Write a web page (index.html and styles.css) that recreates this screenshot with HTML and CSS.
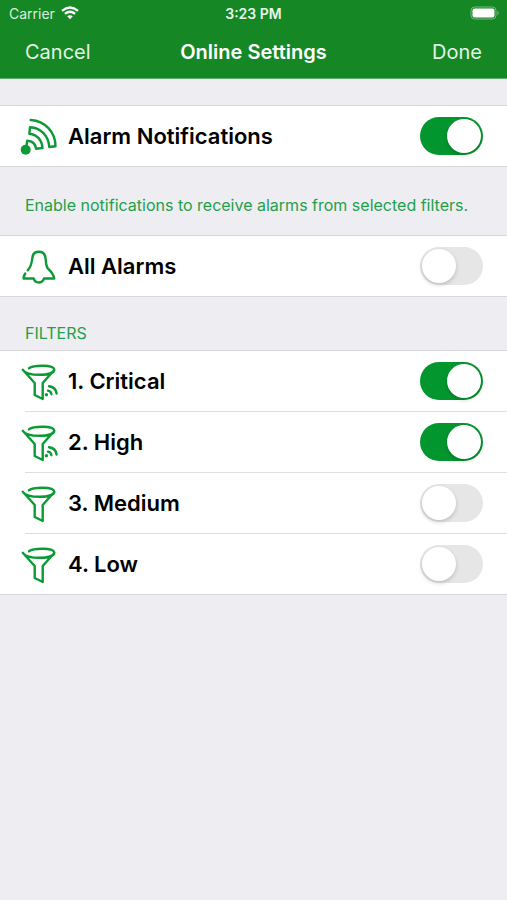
FILE: index.html
```html
<!DOCTYPE html>
<html lang="en">
<head>
<meta charset="utf-8">
<meta name="viewport" content="width=device-width, initial-scale=1">
<title>Online Settings</title>
<link rel="stylesheet" href="styles.css">
</head>
<body>
<svg class="defs" aria-hidden="true">
  <symbol id="funnel" viewBox="0 0 40 40">
    <path d="M9 7.2C13 4.3 33.5 3.2 34.3 8.6C34 15.5 7 15.5 2.8 8.8L14.7 22V34L22.7 38V22L34.3 9"/>
  </symbol>
  <symbol id="waves" viewBox="0 0 40 40">
    <circle class="dot" cx="26.4" cy="33.8" r="1.7"/>
    <path d="M28 29.6Q31 30 31.4 33.2M29 25.2Q35.8 26 36.6 32.5"/>
  </symbol>
</svg>
<header class="top">
  <div class="status">
    <span class="carrier">Carrier
      <svg class="wifi" viewBox="0 0 18 14" aria-hidden="true"><path d="M1 4.8Q9-2 17 4.8M3.9 7.9Q9 3.8 14.1 7.900"/><path class="tip" d="M6.200 10.300Q9 8 11.800 10.300L9 13.300Z"/></svg>
    </span>
    <span class="time">3:23 PM</span>
    <svg class="battery" viewBox="0 0 30 14" aria-hidden="true"><rect class="shell" x="1" y="1" width="25" height="12" rx="3.500"/><rect class="charge" x="2.500" y="2.500" width="22" height="9" rx="2"/><path class="cap" d="M27.500 4.500Q30 7 27.500 9.500Z"/></svg>
  </div>
  <nav class="bar">
    <button type="button">Cancel</button>
    <h1>Online Settings</h1>
    <button type="button" class="done">Done</button>
  </nav>
</header>
<main>
  <section class="group first">
    <label class="row">
      <svg class="icon" viewBox="0 0 40 40" aria-hidden="true"><circle class="dot" cx="5.700" cy="33.700" r="5"/><path d="M10.700 4C25 5 35.500 16 35.500 30.300L29.300 31C28.500 20 21 11.700 10 11.300L9.300 17.700C17 18.500 22 24 22.500 32L16 32.700C15.500 28 12.500 25 7.200 24.700L6.500 30"/></svg>
      <span class="name">Alarm Notifications</span>
      <input type="checkbox" class="switch" role="switch" checked>
    </label>
  </section>
  <p class="note">Enable notifications to receive alarms from selected filters.</p>
  <section class="group">
    <label class="row">
      <svg class="icon" viewBox="0 0 40 40" aria-hidden="true"><path d="M7.800 24.300C11 20.500 11.800 17 12.200 13C12.500 7.500 15.500 5.800 18.800 5.800S25.300 7.500 25.700 13C26 23 28.500 22.500 31.500 26.500C33 28.700 34 30 34.200 32.500H24C23 35.500 21 36.500 18.800 36.500S14.500 35.500 13.700 32.500H3.600Q3.600 30 5.200 27.500"/></svg>
      <span class="name">All Alarms</span>
      <input type="checkbox" class="switch" role="switch">
    </label>
  </section>
  <h2 class="heading">FILTERS</h2>
  <section class="group">
    <label class="row">
      <svg class="icon" aria-hidden="true"><use href="#funnel"/><use href="#waves"/></svg>
      <span class="name">1. Critical</span>
      <input type="checkbox" class="switch" role="switch" checked>
    </label>
    <label class="row">
      <svg class="icon" aria-hidden="true"><use href="#funnel"/><use href="#waves"/></svg>
      <span class="name">2. High</span>
      <input type="checkbox" class="switch" role="switch" checked>
    </label>
    <label class="row">
      <svg class="icon" aria-hidden="true"><use href="#funnel"/></svg>
      <span class="name">3. Medium</span>
      <input type="checkbox" class="switch" role="switch">
    </label>
    <label class="row">
      <svg class="icon" aria-hidden="true"><use href="#funnel"/></svg>
      <span class="name">4. Low</span>
      <input type="checkbox" class="switch" role="switch">
    </label>
  </section>
</main>
</body>
</html>
```
FILE: styles.css
```css
* { box-sizing: border-box; }

body {
  margin: 0;
  background: #eeedf2;
  color: #000;
  font-family: Inter, "Liberation Sans", sans-serif;
}

.defs { position: absolute; width: 0; height: 0; }

.top {
  background: #158725;
  color: #fff;
  border-bottom: 1px solid #5aab66;
}

.status {
  display: grid;
  grid-template-columns: 1fr auto 1fr;
  align-items: center;
  height: 26px;
  padding: 0 7px;
  font-size: 14px;
}

.carrier { display: flex; align-items: center; gap: 6px; padding-left: 2px; color: #d9eedc; }
.wifi { width: 18px; height: 14px; fill: none; stroke: #fff; stroke-width: 2.4; }
.wifi .tip { fill: #fff; stroke: none; }
.time { font-weight: 600; color: #e9f6eb; }
.battery { width: 30px; height: 14px; justify-self: end; }
.shell { fill: none; stroke: #78bb81; }
.charge { fill: #fff; }
.cap { fill: #78bb81; }

.bar {
  display: grid;
  grid-template-columns: 1fr auto 1fr;
  align-items: center;
  height: 52px;
  padding: 0 25px;
}

.bar h1 { margin: 0; font-size: 20px; font-weight: 600; }

.bar button {
  justify-self: start;
  padding: 0;
  border: 0;
  background: none;
  color: #e3f3e5;
  font: inherit;
  font-size: 20px;
}

.bar .done { justify-self: end; }

.group {
  background: #fff;
  border-top: 1px solid #d8d8dc;
  border-bottom: 1px solid #d8d8dc;
}

.first { margin-top: 26px; }

.row {
  display: flex;
  align-items: center;
  height: 60px;
  margin-left: 25px;
  padding-right: 24px;
}

.row + .row { height: 61px; border-top: 1px solid #dedee2; }

.icon {
  flex: none;
  width: 40px;
  height: 40px;
  margin-left: -5px;
  overflow: visible;
  fill: none;
  stroke: #0b9a35;
  stroke-width: 2.4;
  stroke-linecap: round;
  stroke-linejoin: round;
}

.dot { fill: #0b9a35; stroke: none; }

.name { flex: 1; margin-left: 8px; font-size: 22px; font-weight: 600; }

.switch {
  appearance: none;
  flex: none;
  display: flex;
  align-items: center;
  width: 63px;
  height: 38px;
  margin: 0;
  padding: 0 2px;
  border-radius: 19px;
  background: #e6e6e6;
}

.switch::before {
  content: "";
  width: 34px;
  height: 34px;
  border-radius: 50%;
  background: #fff;
  box-shadow: 0 2px 4px rgba(0, 0, 0, 0.18);
}

.switch:checked { justify-content: flex-end; background: #03962f; }

.note, .heading {
  margin: 0;
  padding: 0 25px;
  color: #23a04a;
  font-size: 16px;
  font-weight: 400;
}

.note { padding-top: 28px; padding-bottom: 20px; line-height: 20px; }
.heading { padding-top: 26px; padding-bottom: 7px; line-height: 20px; }
```
